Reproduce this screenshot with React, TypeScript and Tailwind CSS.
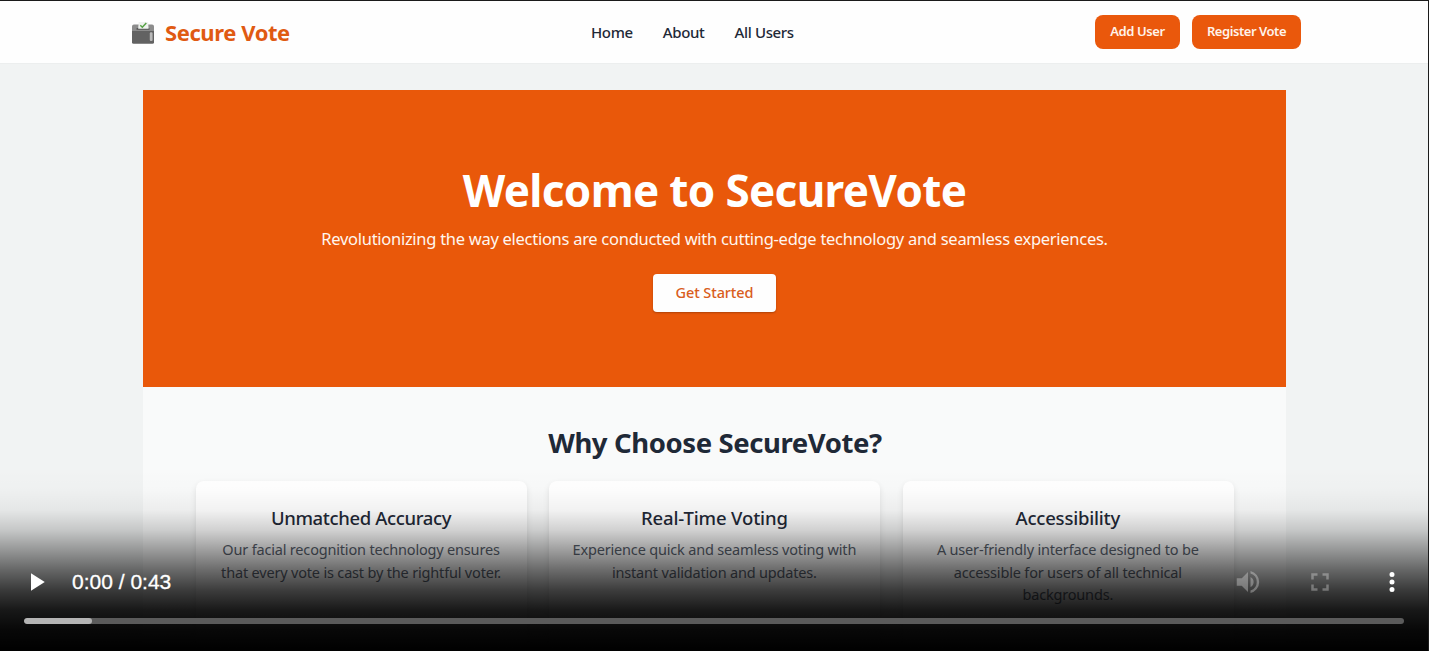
import React from "react";

const features = [
  {
    title: "Unmatched Accuracy",
    titleSpacing: "tracking-[-0.37px]",
    lines: ["Our facial recognition technology ensures", "that every vote is cast by the rightful voter."],
  },
  {
    title: "Real-Time Voting",
    titleSpacing: "tracking-[-0.13px]",
    lines: ["Experience quick and seamless voting with", "instant validation and updates."],
  },
  {
    title: "Accessibility",
    titleSpacing: "tracking-[-0.2px]",
    lines: ["A user-friendly interface designed to be", "accessible for users of all technical", "backgrounds."],
  },
];

function BallotIcon() {
  return (
    <svg width="24" height="24" viewBox="0 0 24 24" className="block">
      <path d="M3 3.500h18a2 2 0 0 1 2 2V11H1V5.500a2 2 0 0 1 2-2z" fill="#8c8c8c" />
      <path d="M1 10h22v11.200a1.600 1.600 0 0 1-1.600 1.600H2.600A1.600 1.600 0 0 1 1 21.200z" fill="#626262" />
      <rect x="5.500" y="7" width="13" height="1.800" rx=".6" fill="#555" />
      <path d="M7.700.9h9.400l.5 6.900H7.200z" fill="#eef1ee" />
      <path d="m9.300 4.300 2 1.900 4-4.300" fill="none" stroke="#55a044" strokeWidth="1.500" />
      <rect x="18.800" y="11.300" width="2.800" height="8.800" rx="1.100" fill="#b9b9b9" />
    </svg>
  );
}

function Header() {
  return (
    <header className="flex h-[62px] shrink-0 items-center bg-[#fefefe] pb-px pl-[131px] pr-[127px] shadow-[0_1px_1px_rgba(0,0,0,0.02)]">
      <div className="flex w-[460px] items-center gap-[10px]">
        <div className="pt-[2px]">
          <BallotIcon />
        </div>
        <span className="whitespace-nowrap text-[22px] font-bold leading-7 tracking-[-0.42px] text-[#e05a12]">Secure Vote</span>
      </div>
      <nav className="flex flex-1 gap-[30px] whitespace-nowrap text-[15px] font-medium leading-5 tracking-[-0.35px] text-[#1f2937]">
        <a>Home</a>
        <a>About</a>
        <a>All Users</a>
      </nav>
      <div className="flex gap-[12px] whitespace-nowrap text-[13px] font-semibold text-[#fff3ea]">
        <button className="h-[34px] w-[85px] rounded-lg bg-[#ea580c] pt-px tracking-[-0.4px]">Add User</button>
        <button className="h-[34px] w-[109px] rounded-lg bg-[#ea580c] pt-px tracking-[-0.45px]">Register Vote</button>
      </div>
    </header>
  );
}

function Hero() {
  return (
    <section className="flex h-[297px] shrink-0 flex-col items-center bg-[#e9580a] pt-[72px] text-white">
      <h1 className="whitespace-nowrap text-[44px] font-bold leading-[56px] tracking-[-0.65px]">Welcome to SecureVote</h1>
      <p className="mt-[8px] whitespace-nowrap text-[16.5px] leading-[26px] tracking-[-0.28px] text-[#fff6ef]">
        Revolutionizing the way elections are conducted with cutting-edge technology and seamless experiences.
      </p>
      <button className="mt-[22px] h-[38px] w-[123px] rounded bg-[#fefefe] text-[14.5px] font-medium tracking-[-0.1px] text-[#d95d1c] shadow-[0_1px_2px_rgba(0,0,0,0.25)]">
        Get Started
      </button>
    </section>
  );
}

function Features() {
  return (
    <section className="flex-1 bg-[#f9fafa] pl-[53px] pr-[52px] pt-[38px] text-center">
      <h2 className="whitespace-nowrap text-[27.5px] font-bold leading-[36px] tracking-[-0.4px] text-[#1f2937]">Why Choose SecureVote?</h2>
      <div className="mt-[20px] grid grid-cols-[331px_331px_331px] justify-start gap-x-[22.4px]">
        {features.map((f) => (
          <article key={f.title} className="h-[190px] rounded-lg bg-white pr-px pt-[24px] shadow-[0_3px_6px_rgba(0,0,0,0.10)]">
            <h3 className={`whitespace-nowrap text-[18.5px] font-medium leading-[26px] text-[#1f2937] ${f.titleSpacing}`}>{f.title}</h3>
            <p className="mt-[7px] whitespace-nowrap text-[14.5px] leading-[22.5px] tracking-[-0.18px] text-[#5a636f]">
              {f.lines.map((line) => (
                <span key={line} className="block">{line}</span>
              ))}
            </p>
          </article>
        ))}
      </div>
    </section>
  );
}

function VideoControls() {
  return (
    <div className="absolute inset-x-0 bottom-0 flex h-[181px] flex-col bg-[linear-gradient(to_bottom,rgba(0,0,0,0)_0px,rgba(0,0,0,0.01)_20px,rgba(0,0,0,0.05)_40px,rgba(0,0,0,0.18)_60px,rgba(0,0,0,0.38)_80px,rgba(0,0,0,0.58)_100px,rgba(0,0,0,0.76)_120px,rgba(0,0,0,0.9)_140px,rgba(0,0,0,0.97)_160px,rgba(0,0,0,1)_181px)] pt-[97px]">
      <div className="flex h-[30px] items-center pl-[21px] pr-[21px] text-white">
        <svg width="30" height="30" viewBox="0 0 24 24" fill="currentColor"><path d="M8 5v14l11-7z" /></svg>
        <span className="ml-[21px] flex-1 font-['Liberation_Sans',sans-serif] text-[21px] leading-[30px] [-webkit-text-stroke:0.3px_white]">0:00 / 0:43</span>
        <div className="flex gap-[42px]">
          <svg width="30" height="30" viewBox="0 0 24 24" fill="currentColor" className="opacity-30">
            <path d="M3 9v6h4l5 5V4L7 9H3zm13.5 3A4.5 4.5 0 0 0 14 7.970v8.050A4.5 4.5 0 0 0 16.500 12zM14 3.230v2.060A7 7 0 0 1 14 18.700v2.060a9 9 0 0 0 0-17.530z" />
          </svg>
          <svg width="30" height="30" viewBox="0 0 24 24" fill="currentColor" className="opacity-30">
            <path d="M7 14H5v5h5v-2H7v-3zm-2-4h2V7h3V5H5v5zm12 7h-3v2h5v-5h-2v3zM14 5v2h3v3h2V5h-5z" />
          </svg>
          <svg width="30" height="30" viewBox="0 0 24 24" fill="currentColor">
            <path d="M12 8a2 2 0 1 0 0-4 2 2 0 0 0 0 4zm0 2a2 2 0 1 0 0 4 2 2 0 0 0 0-4zm0 6a2 2 0 1 0 0 4 2 2 0 0 0 0-4z" />
          </svg>
        </div>
      </div>
      <div className="mx-[24px] mt-[21px] h-[6px] overflow-hidden rounded-full bg-[#5b5b5b]">
        <div className="h-full w-[68px] rounded-full bg-[#b4b4b4]" />
      </div>
    </div>
  );
}

export default function App() {
  return (
    <div className="relative h-[651px] w-[1429px] overflow-hidden border-r border-t border-[#1b1b1b] bg-[#f1f3f3] font-['Noto_Sans','Open_Sans',sans-serif]">
      <div className="flex h-full flex-col">
        <Header />
        <main className="ml-[143px] mt-[27px] flex w-[1143px] flex-1 flex-col">
          <Hero />
          <Features />
        </main>
      </div>
      <VideoControls />
    </div>
  );
}
